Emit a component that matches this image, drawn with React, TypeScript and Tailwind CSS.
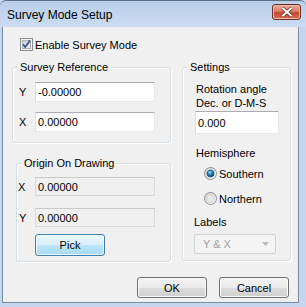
import { useState } from "react";

function CheckBox({ checked }: { checked: boolean }) {
  return (
    <svg width="13" height="13" viewBox="0 0 13 13">
      <defs>
        <linearGradient id="cbIn" x1="0" y1="0" x2="1" y2="1">
          <stop offset="0" stopColor="#cbcfd5" />
          <stop offset="1" stopColor="#f6f6f6" />
        </linearGradient>
      </defs>
      <rect x="0.5" y="0.5" width="12" height="12" fill="#f4f4f4" stroke="#8e8f8f" />
      <rect x="2.5" y="2.5" width="8" height="8" fill="url(#cbIn)" stroke="#aeb3b9" />
      {checked && (
        <path d="M3 6.3 L5.2 9 L10 2.6" fill="none" stroke="#3e5591" strokeWidth="1.8" />
      )}
    </svg>
  );
}

function Radio({ checked }: { checked: boolean }) {
  return (
    <svg width="13" height="13" viewBox="0 0 13 13">
      <defs>
        <linearGradient id="rbOut" x1="0" y1="0" x2="1" y2="1">
          <stop offset="0" stopColor="#d4d4d4" />
          <stop offset="1" stopColor="#fbfbfb" />
        </linearGradient>
        <radialGradient id="rbDot" cx="0.4" cy="0.35" r="0.65">
          <stop offset="0" stopColor="#9fe3f8" />
          <stop offset="0.45" stopColor="#2a8ab8" />
          <stop offset="1" stopColor="#0c3a62" />
        </radialGradient>
      </defs>
      <circle cx="6.5" cy="6.5" r="6" fill="url(#rbOut)" stroke="#8e8f8f" />
      {checked ? (
        <circle cx="6.5" cy="6.5" r="3.6" fill="url(#rbDot)" stroke="#1a4d78" strokeWidth="0.6" />
      ) : (
        <circle cx="6.5" cy="6.5" r="3.8" fill="#e9e9e9" stroke="#c4c4c4" strokeWidth="0.6" />
      )}
    </svg>
  );
}

function GroupBox({
  title,
  className,
  children,
}: {
  title: string;
  className: string;
  children: React.ReactNode;
}) {
  return (
    <div className={`relative border border-[#d5dfe5] rounded-[3px] shadow-[inset_1px_1px_0_#fff,1px_1px_0_#fff] ${className}`}>
      <span className="absolute left-[5px] -top-[8px] px-[2px] bg-[#f0f0f0] leading-[14px]">
        {title}
      </span>
      {children}
    </div>
  );
}

function TextBox({ value, readOnly, className }: { value: string; readOnly?: boolean; className: string }) {
  return (
    <div
      className={`flex items-center pl-[2px] border leading-[14px] ${
        readOnly
          ? "bg-[#f0f0f0] border-[#d9d9d9] border-t-[#c9c9c9]"
          : "bg-white border-[#dbdfe6] border-t-[#abadb3] border-b-[#e3e9ef] border-r-[#e3e9ef]"
      } ${className}`}
    >
      {value}
    </div>
  );
}

function Button({ label, focused, className }: { label: string; focused?: boolean; className: string }) {
  return (
    <button
      className={`rounded-[3px] border leading-[14px] text-black ${
        focused
          ? "border-[#3c7fb1] bg-[linear-gradient(#eaf6fd_0%,#d9f0fc_50%,#bee6fd_50%,#a7d9f5_100%)] shadow-[inset_0_0_0_1px_#f4fbfe]"
          : "border-[#707070] bg-[linear-gradient(#f2f2f2_0%,#ebebeb_50%,#dddddd_50%,#cfcfcf_100%)] shadow-[inset_0_0_0_1px_#fbfbfb]"
      } ${className}`}
    >
      {label}
    </button>
  );
}

export default function App() {
  const [enabled, setEnabled] = useState(true);
  const [southern, setSouthern] = useState(true);

  return (
    <div
      className="w-[306px] h-[307px] flex flex-col bg-[#c4d7ee] text-[11px] text-black overflow-hidden"
      style={{ fontFamily: '"Liberation Sans", Arial, sans-serif' }}
    >
      {/* Title bar */}
      <div className="h-[27px] flex items-center pl-[7px] pr-[5px] bg-[linear-gradient(#b9cfea,#cadcf1)] border-t border-[#5d6f86] rounded-t-[6px]">
        <span className="text-[12px] leading-[14px] flex-1 pt-[1px]">Survey Mode Setup</span>
        <div className="w-[29px] h-[16px] mb-[5px] rounded-[3px] border border-[#6e3024] bg-[linear-gradient(#e9a999_0%,#d9806c_45%,#c4482f_55%,#d5715b_100%)] flex items-center justify-center shadow-[inset_0_0_0_1px_#f0b9ab]">
          <svg width="12" height="10" viewBox="0 0 12 10">
            <path d="M1.5 1 L10.5 9 M10.5 1 L1.5 9" stroke="#5a2218" strokeWidth="3.4" />
            <path d="M1.5 1 L10.5 9 M10.5 1 L1.5 9" stroke="#fff" strokeWidth="2" />
          </svg>
        </div>
      </div>

      {/* Client area */}
      <div className="flex-1 ml-[2px] mr-[7px] mb-[4px] flex flex-col bg-[#f0f0f0] border-l border-r border-b border-[#7b8da5]">
        <label
          className="mt-[11px] ml-[17px] h-[13px] flex items-center gap-[2px] leading-[14px] cursor-default"
          onClick={() => setEnabled(!enabled)}
        >
          <CheckBox checked={enabled} />
          <span>Enable Survey Mode</span>
        </label>

        <div className="flex mt-[16px]">
          <div className="ml-[9px] flex flex-col">
            <GroupBox title="Survey Reference" className="w-[159px] h-[76px] pt-[14px] pl-[6px]">
              <div className="flex items-center">
                <span className="w-[16px] leading-[14px]">Y</span>
                <TextBox value="-0.00000" className="w-[120px] h-[20px]" />
              </div>
              <div className="flex items-center mt-[10px]">
                <span className="w-[16px] leading-[14px]">X</span>
                <TextBox value="0.00000" className="w-[120px] h-[20px]" />
              </div>
            </GroupBox>

            <GroupBox title="Origin On Drawing" className="ml-[4px] mt-[20px] w-[155px] h-[99px] pt-[13px] pl-[1px]">
              <div className="flex items-center">
                <span className="w-[17px] leading-[14px]">X</span>
                <TextBox value="0.00000" readOnly className="w-[120px] h-[19px]" />
              </div>
              <div className="flex items-center mt-[12px]">
                <span className="w-[17px] pl-[1px] leading-[14px]">Y</span>
                <TextBox value="0.00000" readOnly className="w-[120px] h-[19px]" />
              </div>
              <Button label="Pick" focused className="ml-[17px] mt-[7px] w-[70px] h-[22px]" />
            </GroupBox>
          </div>

          <GroupBox title="Settings" className="ml-[11px] w-[109px] h-[194px] pl-[13px] flex flex-col">
            <div className="mt-[14px] leading-[14px]">
              Rotation angle
              <br />
              Dec. or D-M-S
            </div>
            <TextBox value="0.000" className="-ml-[1px] mt-[1px] w-[84px] h-[23px]" />
            <div className="mt-[12px] leading-[14px]">Hemisphere</div>
            <div
              className="mt-[7px] ml-[8px] h-[13px] flex items-center gap-[2px] leading-[14px]"
              onClick={() => setSouthern(true)}
            >
              <Radio checked={southern} />
              <span>Southern</span>
            </div>
            <div
              className="mt-[12px] ml-[8px] h-[13px] flex items-center gap-[2px] leading-[14px]"
              onClick={() => setSouthern(false)}
            >
              <Radio checked={!southern} />
              <span>Northern</span>
            </div>
            <div className="mt-[10px] -ml-[2px] leading-[14px]">Labels</div>
            <div className="mt-[5px] -ml-[2px] w-[82px] h-[20px] flex items-center justify-between pl-[8px] pr-[6px] border border-[#d2d2d2] rounded-[2px] bg-[#f4f4f4] text-[#a0a0a0] leading-[14px]">
              <span>Y &amp; X</span>
              <svg width="7" height="4" viewBox="0 0 7 4">
                <path d="M0 0 H7 L3.5 4 Z" fill="#b8b8b8" />
              </svg>
            </div>
          </GroupBox>
        </div>

        <div className="flex justify-end gap-[12px] mt-[15px] mr-[9px]">
          <Button label="OK" className="w-[70px] h-[21px]" />
          <Button label="Cancel" className="w-[70px] h-[21px]" />
        </div>
      </div>
    </div>
  );
}
